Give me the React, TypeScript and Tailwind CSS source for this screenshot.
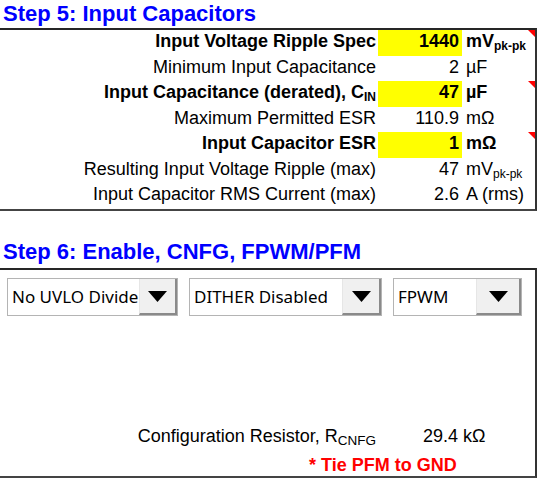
import React from "react";

const Sub = ({
  children,
  size = "text-[12px]",
}: {
  children: React.ReactNode;
  size?: string;
}) => <span className={`relative top-[3px] ${size}`}>{children}</span>;

type Row = {
  label: React.ReactNode;
  value: string;
  unit: React.ReactNode;
  bold?: boolean;
  yellow?: boolean;
  marker?: boolean;
};

const rows: Row[] = [
  {
    label: "Input Voltage Ripple Spec",
    value: "1440",
    unit: (
      <>
        mV<Sub>pk-pk</Sub>
      </>
    ),
    bold: true,
    yellow: true,
    marker: true,
  },
  { label: "Minimum Input Capacitance", value: "2", unit: "µF" },
  {
    label: (
      <>
        Input Capacitance (derated), C<Sub>IN</Sub>
      </>
    ),
    value: "47",
    unit: "µF",
    bold: true,
    yellow: true,
    marker: true,
  },
  { label: "Maximum Permitted ESR", value: "110.9", unit: "mΩ" },
  {
    label: "Input Capacitor ESR",
    value: "1",
    unit: "mΩ",
    bold: true,
    yellow: true,
    marker: true,
  },
  {
    label: "Resulting Input Voltage Ripple (max)",
    value: "47",
    unit: (
      <>
        mV<Sub>pk-pk</Sub>
      </>
    ),
  },
  { label: "Input Capacitor RMS Current (max)", value: "2.6", unit: "A (rms)" },
];

const Select = ({
  text,
  width,
  btn,
}: {
  text: string;
  width: string;
  btn: string;
}) => (
  <div
    className={`flex h-[38px] ${width} border border-[#b4b4b4] bg-white`}
  >
    <div className="flex flex-1 items-center pl-[4px] text-[17px] text-black [font-family:'Noto_Sans','Open_Sans',sans-serif] whitespace-nowrap overflow-hidden">
      {text}
    </div>
    <div
      className={`flex ${btn} items-center justify-center bg-[#f0f0f0] border-l border-l-[#e6e6e6] border-r-2 border-b-2 border-r-[#8a8a8a] border-b-[#8a8a8a]`}
    >
      <svg width="19" height="11" viewBox="0 0 19 11">
        <polygon points="0,0 19,0 9.5,11" fill="#000" />
      </svg>
    </div>
  </div>
);

export default function App() {
  return (
    <div className="w-[539px] h-[480px] bg-white text-black [font-family:'Liberation_Sans',Arial,sans-serif] overflow-hidden">
      <div className="h-[28px] pt-[1px] pl-[3px] text-[22px] leading-[26px] font-bold text-[#0000ff]">
        Step 5: Input Capacitors
      </div>
      <div className="w-[537px] border-t-2 border-t-[#262626] border-r-2 border-r-[#333] border-b-2 border-b-[#444]">
        {rows.map((r, i) => (
          <div
            key={i}
            className={`flex h-[25.5px] text-[18px] leading-[20px] ${
              r.bold ? "font-bold" : ""
            }`}
          >
            <div className="w-[376px] pt-[1px] text-right whitespace-nowrap">
              {r.label}
            </div>
            <div
              className={`ml-[2px] w-[84px] pt-[1px] pr-[3px] text-right ${
                r.yellow ? "bg-[#ffff00]" : ""
              }`}
            >
              {r.value}
            </div>
            <div className="relative flex-1 pt-[1px] pl-[4px] whitespace-nowrap">
              {r.unit}
              {r.marker && (
                <div className="absolute right-0 top-0 h-0 w-0 border-t-[7px] border-l-[7px] border-t-[#ff0000] border-l-transparent" />
              )}
            </div>
          </div>
        ))}
      </div>

      <div className="mt-[28.5px] h-[29px] pl-[3px] text-[22px] leading-[26px] font-bold text-[#0000ff]">
        Step 6: Enable, CNFG, FPWM/PFM
      </div>
      <div className="flex h-[210px] w-[537px] flex-col border-t-2 border-t-[#262626] border-r-2 border-r-[#333] border-b-2 border-b-[#444]">
        <div className="mt-[8px] flex gap-[11px] pl-[7px]">
          <Select text="No UVLO Divide" width="w-[171px]" btn="w-[38px]" />
          <Select text="DITHER Disabled" width="w-[193px]" btn="w-[39px]" />
          <Select text="FPWM" width="w-[129px]" btn="w-[45px]" />
        </div>
        <div className="mt-[110px] flex text-[18px] leading-[20px]">
          <div className="w-[376px] text-right whitespace-nowrap">
            Configuration Resistor, R<Sub size="text-[13.5px]">CNFG</Sub>
          </div>
          <div className="ml-[47px]">29.4 kΩ</div>
        </div>
        <div className="mt-[7px] pl-[309px] text-[18px] leading-[20px] font-bold text-[#ff0000]">
          * Tie PFM to GND
        </div>
      </div>
    </div>
  );
}
